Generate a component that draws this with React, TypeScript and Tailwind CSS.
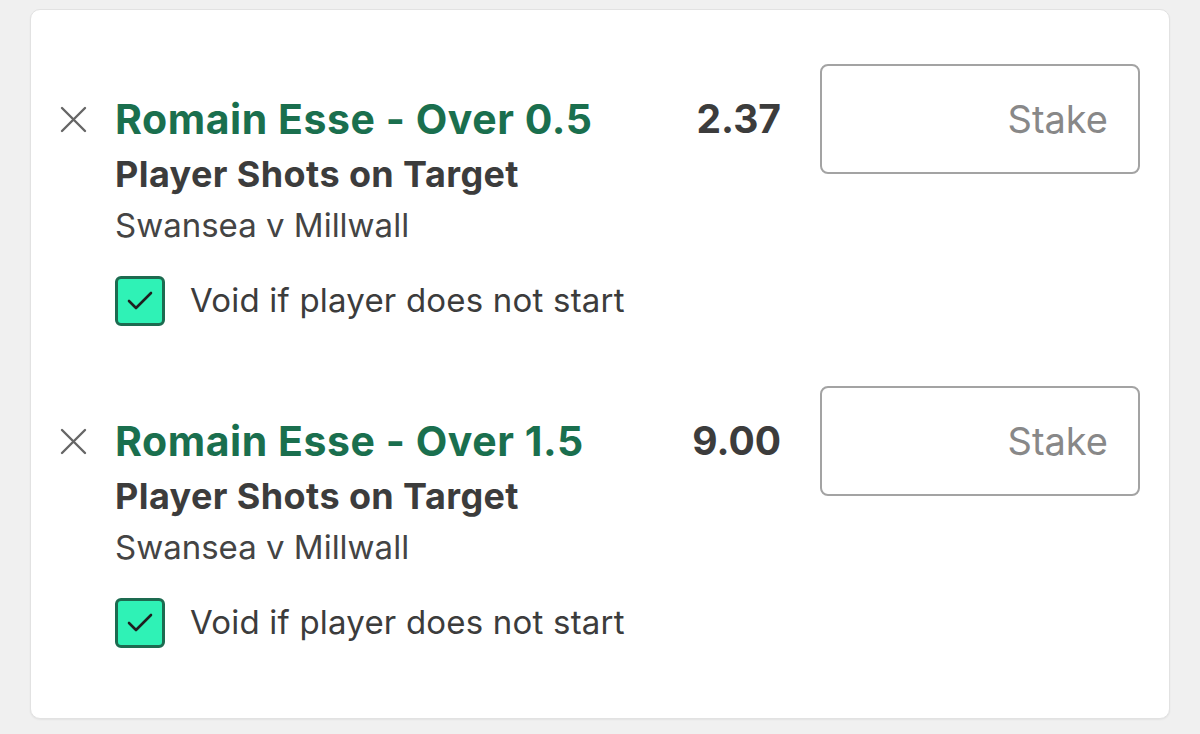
import React from 'react'

interface Bet {
  selection: string
  market: string
  event: string
  odds: string
}

const bets: Bet[] = [
  { selection: 'Romain Esse - Over 0.5', market: 'Player Shots on Target', event: 'Swansea v Millwall', odds: '2.37' },
  { selection: 'Romain Esse - Over 1.5', market: 'Player Shots on Target', event: 'Swansea v Millwall', odds: '9.00' },
]

const CloseIcon = () => (
  <svg width="27" height="27" viewBox="0 0 27 27" fill="none" stroke="#666666" strokeWidth="2.4" strokeLinecap="round">
    <path d="M2 2 L25 25 M25 2 L2 25" />
  </svg>
)

function BetRow({ bet }: { bet: Bet }) {
  return (
    <div className="flex items-start">
      <div className="flex-1 flex items-start pt-[27px]">
        <div className="w-[56px] shrink-0 flex items-center h-[56px]">
          <CloseIcon />
        </div>
        <div className="flex-1 -ml-[1px]">
          <div className="h-[56px] flex items-center text-[41px] tracking-[0.55px] font-bold text-[#1a6f4e] leading-none">
            {bet.selection}
          </div>
          <div className="text-[36px] tracking-[0.4px] font-bold text-[#3c3c3c] leading-[44px] mt-[5px]">{bet.market}</div>
          <div className="text-[33px] text-[#444444] leading-[44px] mt-[7px]">{bet.event}</div>
          <label className="flex items-center gap-[25px] mt-[29px]">
            <span className="w-[50px] h-[50px] rounded-[6px] border-[3px] border-[#1d6b50] bg-[#2ff2b6] flex items-center justify-center">
              <svg width="26" height="20" viewBox="0 0 26 20" fill="none" stroke="#1f1f1f" strokeWidth="2.6" strokeLinecap="round" strokeLinejoin="round">
                <path d="M2 10 L9 17 L24 2" />
              </svg>
            </span>
            <span className="text-[33px] tracking-[0.2px] text-[#3c3c3c]">Void if player does not start</span>
          </label>
        </div>
      </div>
      <div className="h-[56px] mt-[27px] flex items-center text-[39px] font-bold text-[#3c3c3c] mr-[39px]">{bet.odds}</div>
      <div className="w-[320px] h-[110px] border-2 border-[#a3a3a3] rounded-[8px] flex items-center justify-end pr-[30px] text-[38px] text-[#888888]">
        Stake
      </div>
    </div>
  )
}

export default function App() {
  return (
    <div className="w-[1200px] h-[734px] bg-[#f0f0f0] pt-[9px] px-[30px]" style={{ fontFamily: 'Inter, "Noto Sans", sans-serif' }}>
      <div className="h-[710px] bg-white rounded-[10px] border border-[#e2e2e2] shadow-[0_1px_2px_rgba(0,0,0,0.06)] pl-[29px] pr-[29px] pt-[54px] flex flex-col gap-[60px]">
        {bets.map((bet, i) => (
          <BetRow key={i} bet={bet} />
        ))}
      </div>
    </div>
  )
}
